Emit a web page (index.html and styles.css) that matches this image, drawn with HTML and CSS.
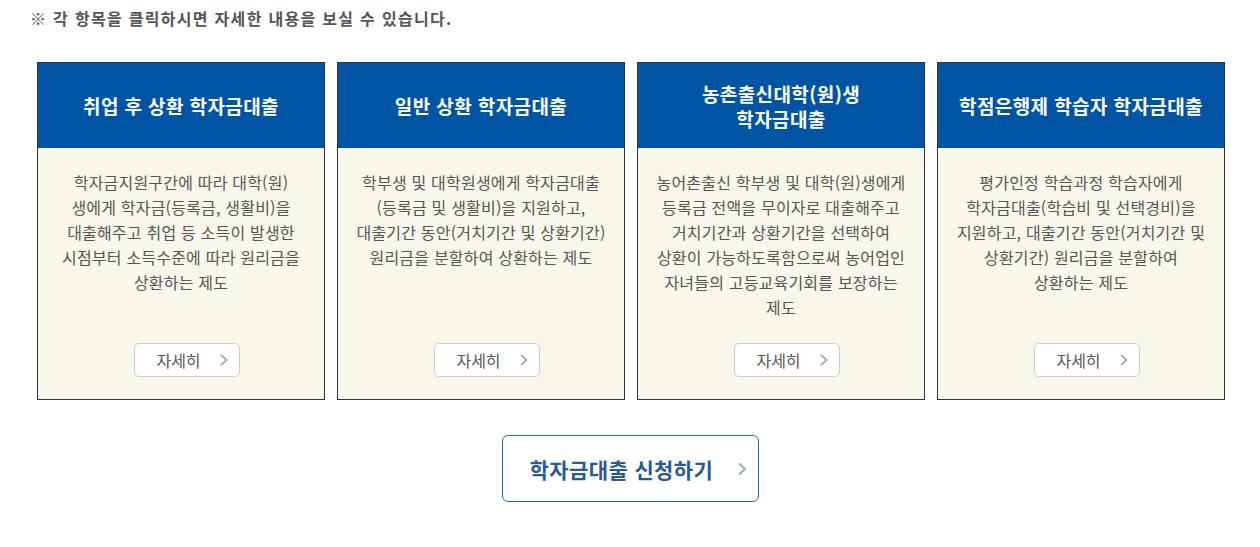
FILE: index.html
```html
<!DOCTYPE html>
<html lang="ko">
<head>
<meta charset="utf-8">
<link rel="stylesheet" href="styles.css">
</head>
<body>
<div class="page">
  <p class="note">※ 각 항목을 클릭하시면 자세한 내용을 보실 수 있습니다.</p>
  <div class="cards">
    <div class="card">
      <div class="card-head"><h3>취업 후 상환 학자금대출</h3></div>
      <div class="card-body">
        <p>학자금지원구간에 따라 대학(원)<br>생에게 학자금(등록금, 생활비)을<br>대출해주고 취업 등 소득이 발생한<br>시점부터 소득수준에 따라 원리금을<br>상환하는 제도</p>
        <a class="more" href="#">자세히<span class="chev"><svg width="8" height="12" viewBox="0 0 8 12"><path d="M1 1l5.5 5-5.5 5" fill="none" stroke="#999" stroke-width="1.6"/></svg></span></a>
      </div>
    </div>
    <div class="card">
      <div class="card-head"><h3>일반 상환 학자금대출</h3></div>
      <div class="card-body">
        <p>학부생 및 대학원생에게 학자금대출<br>(등록금 및 생활비)을 지원하고,<br>대출기간 동안(거치기간 및 상환기간)<br>원리금을 분할하여 상환하는 제도</p>
        <a class="more" href="#">자세히<span class="chev"><svg width="8" height="12" viewBox="0 0 8 12"><path d="M1 1l5.5 5-5.5 5" fill="none" stroke="#999" stroke-width="1.6"/></svg></span></a>
      </div>
    </div>
    <div class="card">
      <div class="card-head"><h3>농촌출신대학(원)생<br>학자금대출</h3></div>
      <div class="card-body">
        <p>농어촌출신 학부생 및 대학(원)생에게<br>등록금 전액을 무이자로 대출해주고<br>거치기간과 상환기간을 선택하여<br>상환이 가능하도록함으로써 농어업인<br>자녀들의 고등교육기회를 보장하는<br>제도</p>
        <a class="more" href="#">자세히<span class="chev"><svg width="8" height="12" viewBox="0 0 8 12"><path d="M1 1l5.5 5-5.5 5" fill="none" stroke="#999" stroke-width="1.6"/></svg></span></a>
      </div>
    </div>
    <div class="card">
      <div class="card-head"><h3>학점은행제 학습자 학자금대출</h3></div>
      <div class="card-body">
        <p>평가인정 학습과정 학습자에게<br>학자금대출(학습비 및 선택경비)을<br>지원하고, 대출기간 동안(거치기간 및<br>상환기간) 원리금을 분할하여<br>상환하는 제도</p>
        <a class="more" href="#">자세히<span class="chev"><svg width="8" height="12" viewBox="0 0 8 12"><path d="M1 1l5.5 5-5.5 5" fill="none" stroke="#999" stroke-width="1.6"/></svg></span></a>
      </div>
    </div>
  </div>
  <div class="apply-wrap">
    <a class="apply" href="#">학자금대출 신청하기<span class="apply-chev"><svg width="10" height="14" viewBox="0 0 10 14"><path d="M2 1.5l6 5.5-6 5.5" fill="none" stroke="#8fa9c8" stroke-width="1.8"/></svg></span></a>
  </div>
</div>
</body>
</html>
```

FILE: styles.css
```css
* { box-sizing: border-box; }
html, body { margin: 0; padding: 0; background: #fff; }
body {
  font-family: "Noto Sans CJK KR", "Noto Sans", sans-serif;
  color: #555;
}
.page {
  width: 1260px;
  padding-top: 6px;
}
.note {
  margin: 0 0 0 30px;
  font-size: 16px;
  font-weight: bold;
  line-height: 24px;
  color: #555;
  letter-spacing: 1.3px;
}
.cards {
  display: flex;
  gap: 12px;
  margin: 32px 0 0 37px;
}
.card {
  width: 288px;
  height: 338px;
  border: 1px solid #333;
  display: flex;
  flex-direction: column;
}
.card-head {
  height: 85px;
  background: #0054a4;
  display: flex;
  align-items: center;
  justify-content: center;
}
.card-head h3 {
  margin: 0;
  color: #fff;
  font-size: 19px;
  font-weight: bold;
  line-height: 25px;
  text-align: center;
  letter-spacing: 0.4px;
}
.card-body {
  flex: 1;
  background: #f9f7e9;
  display: flex;
  flex-direction: column;
  align-items: center;
  padding: 22px 0 22px;
}
.card-body p {
  margin: 0;
  font-size: 16px;
  line-height: 25px;
  color: #555;
  text-align: center;
  letter-spacing: 0.2px;
}
.more {
  margin: auto 0 0 12px;
  width: 106px;
  height: 34px;
  border: 1px solid #ccc;
  border-radius: 5px;
  background: #fff;
  display: flex;
  align-items: center;
  justify-content: center;
  gap: 19px;
  padding-left: 10px;
  color: #555;
  font-size: 16px;
  text-decoration: none;
}
.chev { display: flex; }
.apply-wrap {
  display: flex;
  justify-content: center;
  padding-top: 35px;
}
.apply {
  width: 257px;
  height: 67px;
  border: 1px solid #1a6cbd;
  border-radius: 6px;
  display: flex;
  align-items: center;
  justify-content: flex-start;
  gap: 24px;
  padding-left: 27px;
  color: #2a5a96;
  font-size: 21px;
  font-weight: bold;
  letter-spacing: 0.4px;
  text-decoration: none;
}
.apply-chev { display: flex; }
```
